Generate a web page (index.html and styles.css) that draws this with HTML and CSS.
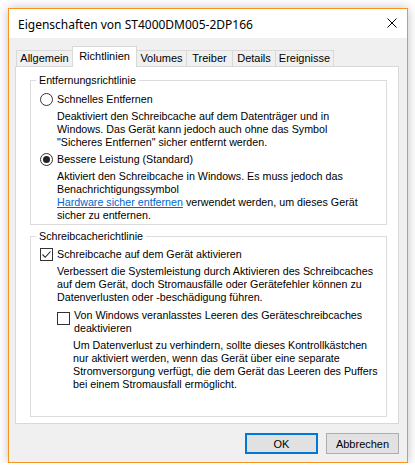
FILE: index.html
```html
<!DOCTYPE html>
<html lang="de">
<head>
    <meta charset="UTF-8">
    <title>Eigenschaften von ST4000DM005-2DP166</title>
    <link rel="stylesheet" href="styles.css">
</head>
<body>
    <div class="window">
        <div class="titlebar">
            <span class="title">Eigenschaften von ST4000DM005-2DP166</span>
            <svg class="close" width="10" height="10" viewBox="0 0 10 10">
                <path d="M0.5 0.5 L9.5 9.5 M9.5 0.5 L0.5 9.5" stroke="#000" stroke-width="1" fill="none"/>
            </svg>
        </div>

        <div class="content">
            <div class="tabs">
                <div class="tab tab-general">Allgemein</div>
                <div class="tab tab-policies active">Richtlinien</div>
                <div class="tab tab-volumes">Volumes</div>
                <div class="tab tab-driver">Treiber</div>
                <div class="tab tab-details">Details</div>
                <div class="tab tab-events">Ereignisse</div>
            </div>

            <div class="panel">
                <fieldset class="group first">
                    <legend>Entfernungsrichtlinie</legend>

                    <div class="option">
                        <span class="radio"></span>
                        <span>Schnelles Entfernen</span>
                    </div>
                    <p class="desc">Deaktiviert den Schreibcache auf dem Datenträger und in Windows. Das Gerät kann jedoch auch ohne das Symbol "Sicheres Entfernen" sicher entfernt werden.</p>

                    <div class="option">
                        <span class="radio checked"></span>
                        <span>Bessere Leistung (Standard)</span>
                    </div>
                    <p class="desc">Aktiviert den Schreibcache in Windows. Es muss jedoch das Benachrichtigungssymbol<br><a href="#">Hardware sicher entfernen</a> verwendet werden, um dieses Gerät sicher zu entfernen.</p>
                </fieldset>

                <fieldset class="group second">
                    <legend>Schreibcacherichtlinie</legend>

                    <div class="option">
                        <span class="check">
                            <svg width="11" height="11" viewBox="0 0 11 11">
                                <path d="M1.5 5.5 L4.2 8.3 L9.5 2.5" stroke="#222" stroke-width="1.1" fill="none"/>
                            </svg>
                        </span>
                        <span>Schreibcache auf dem Gerät aktivieren</span>
                    </div>
                    <p class="desc">Verbessert die Systemleistung durch Aktivieren des Schreibcaches auf dem Gerät, doch Stromausfälle oder Gerätefehler können zu Datenverlusten oder -beschädigung führen.</p>

                    <div class="sub">
                        <div class="option multi">
                            <span class="check"></span>
                            <span>Von Windows veranlasstes Leeren des Geräteschreibcaches deaktivieren</span>
                        </div>
                        <p class="desc">Um Datenverlust zu verhindern, sollte dieses Kontrollkästchen nur aktiviert werden, wenn das Gerät über eine separate Stromversorgung verfügt, die dem Gerät das Leeren des Puffers bei einem Stromausfall ermöglicht.</p>
                    </div>
                </fieldset>
            </div>

            <div class="buttons">
                <button class="default">OK</button>
                <button>Abbrechen</button>
            </div>
        </div>
    </div>
</body>
</html>
```

FILE: styles.css
```css
* {
    box-sizing: border-box;
}
body {
    margin: 0;
    background-color: #fff;
    font-family: "Liberation Sans", Arial, sans-serif;
    font-size: 10.7px;
    line-height: 13px;
    color: #000;
}
.window {
    margin: 8px 0 0 8px;
    width: 400px;
    border: 1px solid #f7931e;
    background-color: #f0f0f0;
    box-shadow: 0 0 10px rgba(0, 0, 0, 0.25);
}
.titlebar {
    height: 29px;
    background-color: #fff;
    display: flex;
    align-items: center;
    justify-content: space-between;
    padding: 0 10px 0 9px;
}
.title {
    font-family: "Noto Sans", sans-serif;
    font-size: 12px;
    margin-top: 1px;
}
.close {
    margin-top: -1px;
}
.content {
    padding: 8px 8px 8px 6px;
}

/* tab strip */
.tabs {
    display: flex;
    align-items: flex-end;
    height: 20px;
    padding-left: 1px;
}
.tab {
    height: 16px;
    line-height: 15px;
    text-align: center;
    border: 1px solid #d9d9d9;
    border-bottom: none;
    margin-left: -1px;
    background-color: #f0f0f0;
    font-size: 11px;
}
.tab:first-child {
    margin-left: 0;
}
.tab.active {
    height: 21px;
    line-height: 19px;
    background-color: #fff;
    position: relative;
    top: 1px;
    z-index: 1;
}
.tab-general { width: 57px; }
.tab-policies { width: 65px; }
.tab-volumes { width: 51px; }
.tab-driver { width: 47px; }
.tab-details { width: 44px; }
.tab-events { width: 59px; }

.panel {
    background-color: #fff;
    border: 1px solid #d9d9d9;
    height: 358px;
    padding: 7px 11px 0 14px;
}

/* group boxes */
.group {
    border: 1px solid #dcdcdc;
    margin: 0;
    padding: 0 4px 2px 9px;
}
.group legend {
    padding: 0 3px;
    margin-left: -4px;
    line-height: 13px;
}
.group.second {
    margin-top: 5px;
    padding-bottom: 25px;
}
.option {
    display: flex;
    align-items: center;
    gap: 4px;
    height: 15px;
    margin-top: 3px;
}
.group > .option:first-of-type {
    margin-top: 5px;
}
.second > .option:first-of-type {
    margin-top: 4px;
}
.radio {
    width: 13px;
    height: 13px;
    border: 1px solid #333;
    border-radius: 50%;
    display: flex;
    align-items: center;
    justify-content: center;
    flex: none;
}
.radio.checked::after {
    content: "";
    width: 7px;
    height: 7px;
    border-radius: 50%;
    background-color: #222;
}
.check {
    width: 13px;
    height: 13px;
    border: 1px solid #333;
    display: flex;
    align-items: center;
    justify-content: center;
    background-color: #fff;
    flex: none;
}
.desc {
    margin: 3px 0 0 17px;
}
.first .desc {
    max-width: 310px;
}
.desc a {
    color: #0066cc;
}
.sub {
    margin: 5px 0 0 17px;
}
.option.multi {
    align-items: flex-start;
    height: auto;
    margin-top: 0;
}
.option.multi .check {
    margin-top: 3px;
}
.sub .desc {
    margin-top: 4px;
    margin-left: 16px;
}

/* dialog buttons */
.buttons {
    display: flex;
    justify-content: flex-end;
    gap: 8px;
    margin-top: 9px;
}
button {
    font-family: "Liberation Sans", Arial, sans-serif;
    font-size: 11px;
    width: 73px;
    height: 21px;
    background-color: #e1e1e1;
    border: 1px solid #adadad;
    color: #000;
    padding: 0;
}
button.default {
    border: 2px solid #0078d7;
}
```
